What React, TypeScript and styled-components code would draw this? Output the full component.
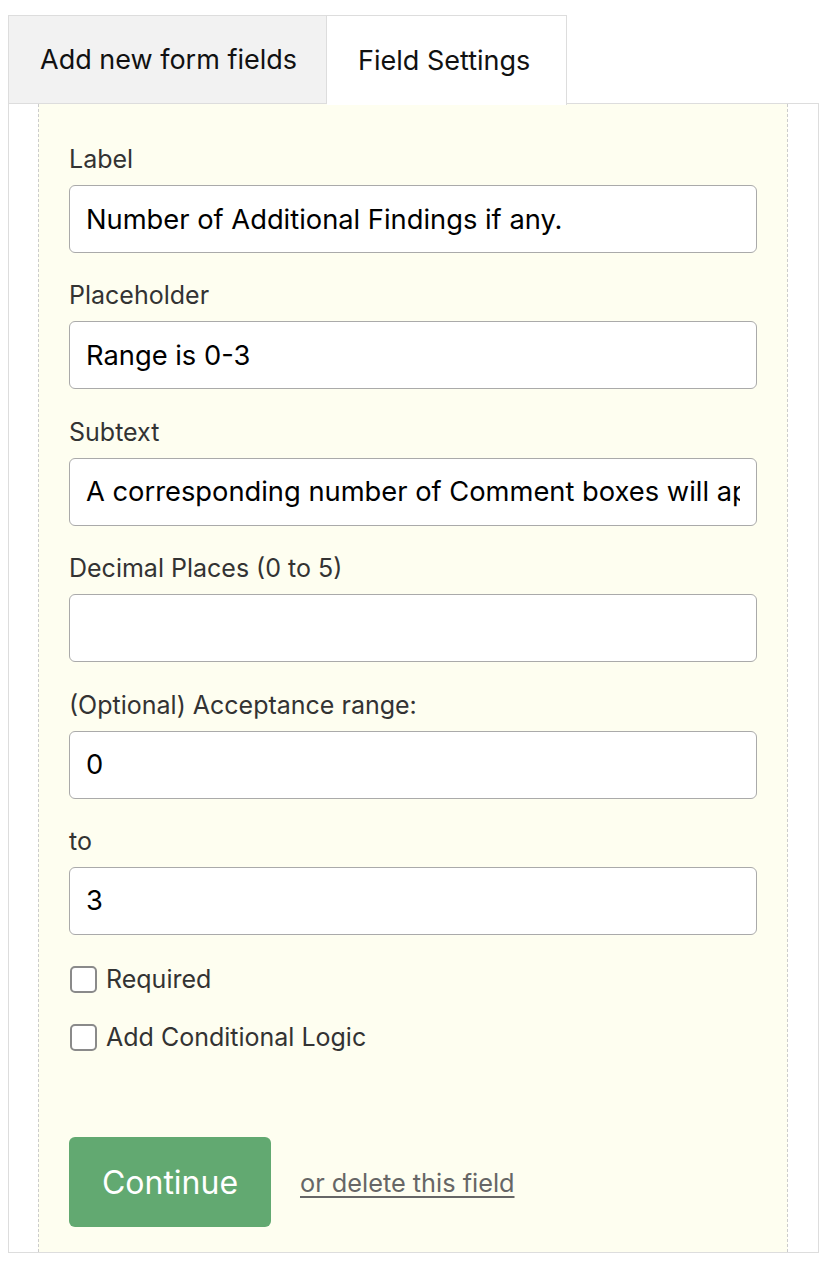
import styled, { createGlobalStyle } from "styled-components";

const GlobalStyle = createGlobalStyle`
  body {
    margin: 0;
    background: #ffffff;
    font-family: Inter, "Noto Sans", sans-serif;
  }
`;

const Page = styled.div`
  padding: 15px 5px 10px 8px;
`;

const Tabs = styled.div`
  display: flex;
  position: relative;
  z-index: 1;
`;

const Tab = styled.div<{ $active?: boolean }>`
  box-sizing: border-box;
  display: flex;
  align-items: center;
  padding: ${(p) => (p.$active ? "0 36px 0 31px" : "0 29px 0 31px")};
  font-size: 27px;
  color: #111111;
  border: 1px solid #dddddd;
  border-bottom: ${(p) => (p.$active ? "none" : "1px solid #dddddd")};
  border-left: ${(p) => (p.$active ? "none" : "1px solid #dddddd")};
  background: ${(p) => (p.$active ? "#ffffff" : "#f2f2f2")};
  margin-bottom: ${(p) => (p.$active ? "-1px" : "0")};
  height: ${(p) => (p.$active ? "90px" : "89px")};
`;

const Frame = styled.div`
  box-sizing: border-box;
  width: 811px;
  margin-top: -1px;
  border: 1px solid #dddddd;
  padding: 0 30px 0 29px;
`;

const Panel = styled.div`
  background: #fefef0;
  border-left: 1px dashed #cccccc;
  border-right: 1px dashed #cccccc;
  padding: 40px 30px 25px 30px;
`;

const Field = styled.div`
  display: flex;
  flex-direction: column;
  margin-bottom: 27.4px;
`;

const Label = styled.label`
  font-size: 25px;
  line-height: 30px;
  color: #333333;
  margin-bottom: 11px;
`;

const Input = styled.input`
  box-sizing: border-box;
  height: 68px;
  width: 100%;
  padding: 0 16px;
  font-family: inherit;
  font-size: 27.3px;
  color: #000000;
  background: #ffffff;
  border: 1px solid #aaaaaa;
  border-radius: 6px;
  outline: none;
`;

const CheckRow = styled.label`
  display: flex;
  align-items: center;
  gap: 9px;
  height: 34px;
  font-size: 25px;
  color: #333333;
  margin-bottom: 24px;
  &:first-of-type {
    margin-top: 2px;
  }
`;

const Box = styled.span`
  box-sizing: border-box;
  width: 27px;
  height: 27px;
  border: 2px solid #8a8a8a;
  border-radius: 5px;
  background: #ffffff;
  margin-left: 1px;
`;

const Actions = styled.div`
  display: flex;
  align-items: center;
  gap: 29px;
  margin-top: 83px;
`;

const Button = styled.button`
  width: 202px;
  height: 90px;
  border: none;
  border-radius: 6px;
  background: #62a971;
  color: #ffffff;
  font-family: inherit;
  font-size: 32px;
`;

const DeleteLink = styled.a`
  font-size: 25.3px;
  color: #666666;
  text-decoration: underline;
  text-underline-offset: 4px;
  cursor: pointer;
`;

const fields = [
  { label: "Label", value: "Number of Additional Findings if any." },
  { label: "Placeholder", value: "Range is 0-3" },
  { label: "Subtext", value: "A corresponding number of Comment boxes will appear below." },
  { label: "Decimal Places (0 to 5)", value: "" },
  { label: "(Optional) Acceptance range:", value: "0" },
  { label: "to", value: "3" },
];

export default function App() {
  return (
    <Page>
      <GlobalStyle />
      <Tabs>
        <Tab>Add new form fields</Tab>
        <Tab $active>Field Settings</Tab>
      </Tabs>
      <Frame>
        <Panel>
          {fields.map((f) => (
            <Field key={f.label}>
              <Label>{f.label}</Label>
              <Input defaultValue={f.value} />
            </Field>
          ))}
          <CheckRow>
            <Box />
            Required
          </CheckRow>
          <CheckRow>
            <Box />
            Add Conditional Logic
          </CheckRow>
          <Actions>
            <Button>Continue</Button>
            <DeleteLink>or delete this field</DeleteLink>
          </Actions>
        </Panel>
      </Frame>
    </Page>
  );
}
